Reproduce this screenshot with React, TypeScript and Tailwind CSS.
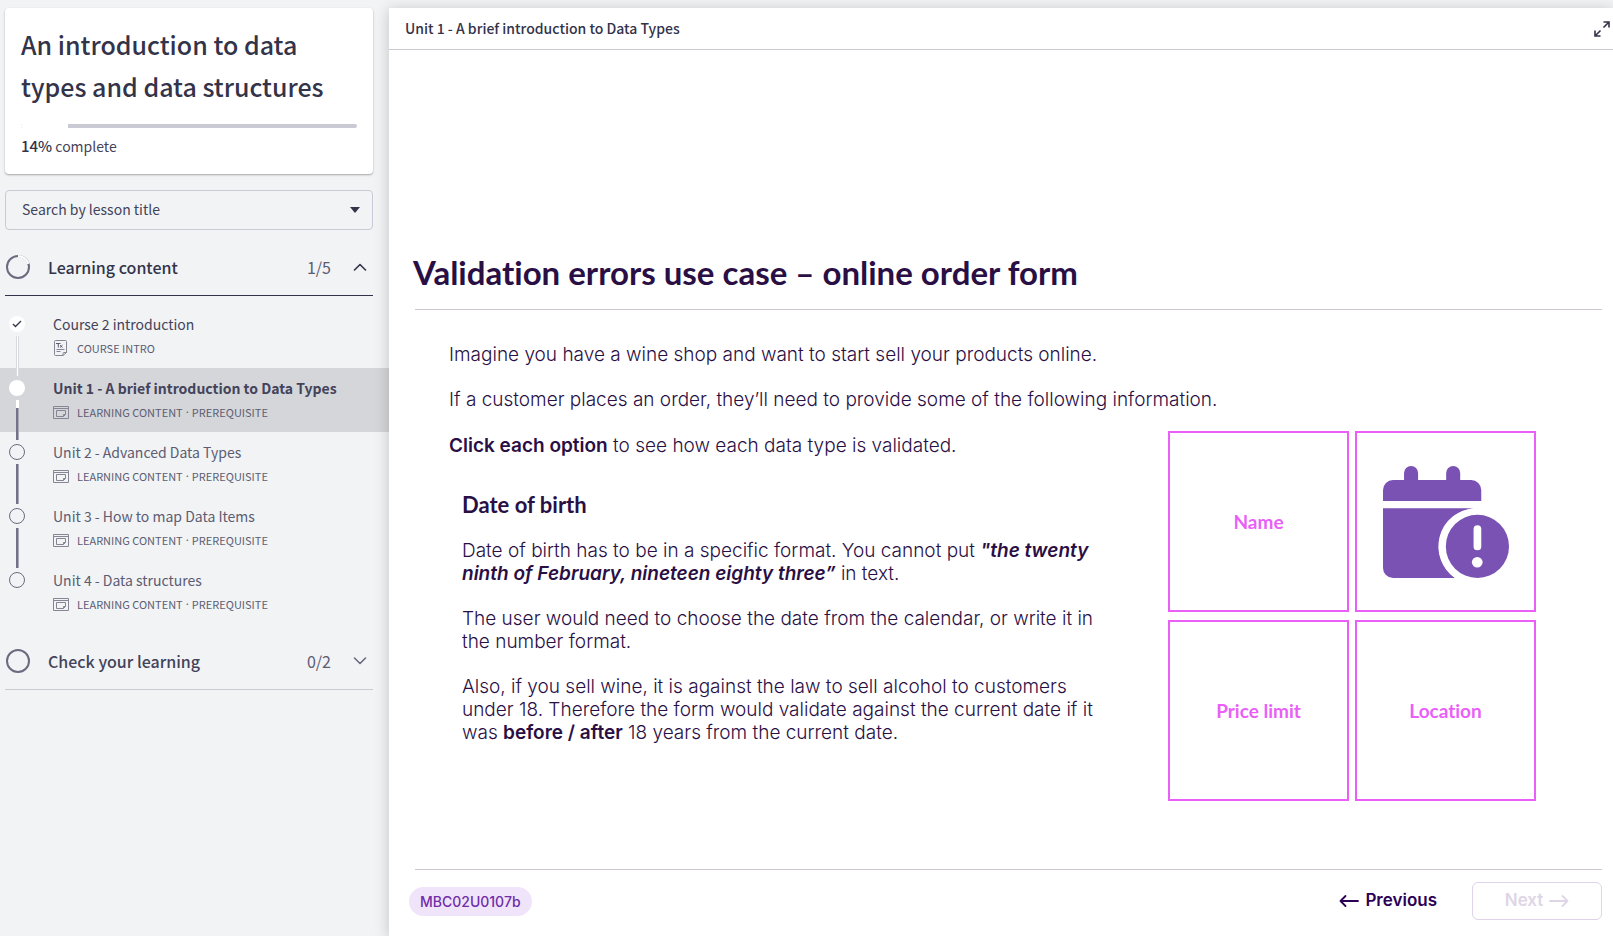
import React from "react";

type Status = "done" | "current" | "todo";

type Lesson = {
  title: string;
  tags: string[];
  status: Status;
  kind: "text" | "screen";
};

const lessons: Lesson[] = [
  { title: "Course 2 introduction", tags: ["COURSE INTRO"], status: "done", kind: "text" },
  {
    title: "Unit 1 - A brief introduction to Data Types",
    tags: ["LEARNING CONTENT", "PREREQUISITE"],
    status: "current",
    kind: "screen",
  },
  { title: "Unit 2 - Advanced Data Types", tags: ["LEARNING CONTENT", "PREREQUISITE"], status: "todo", kind: "screen" },
  { title: "Unit 3 - How to map Data Items", tags: ["LEARNING CONTENT", "PREREQUISITE"], status: "todo", kind: "screen" },
  { title: "Unit 4 - Data structures", tags: ["LEARNING CONTENT", "PREREQUISITE"], status: "todo", kind: "screen" },
];

function TextPageIcon() {
  return (
    <svg width="16" height="16" viewBox="0 0 16 16" fill="none" stroke="#858594" strokeWidth="1" aria-hidden="true">
      <path d="M10 15.5H2.5a1 1 0 0 1-1-1v-13a1 1 0 0 1 1-1h10a1 1 0 0 1 1 1v11z" />
      <path d="M10 15.5v-2a1 1 0 0 1 1-1h2.500M3.500 9.500h8M3.500 11.500h4" />
      <path d="M3 3.500h4.500M5.300 3.500v4M7 5.200l2.500 2.300M9.500 5.200L7 7.500" stroke="#5c5c72" />
    </svg>
  );
}

function ScreenIcon() {
  return (
    <svg width="16" height="13" viewBox="0 0 16 13" fill="none" stroke="#858594" strokeWidth="1" aria-hidden="true">
      <path d="M.5.5h15v12H.5zM.5 2.5h15" />
      <path d="M3.500 4.500h9v4l-2 2h-7zM12.500 8.500h-2v2" />
    </svg>
  );
}

function CalendarAlertIcon() {
  return (
    <svg width="126" height="112" viewBox="0 0 377 335" fill="#7952b3" aria-hidden="true">
      <path d="M0 105V72a30 30 0 0 1 30-30h33V21a21 21 0 0 1 42 0v21h84V21a21 21 0 0 1 42 0v21h33a30 30 0 0 1 30 30v33z" />
      <path d="M0 126h272A115 115 0 0 0 215 335H30a30 30 0 0 1-30-30z" />
      <circle cx="282" cy="241" r="115" fill="#fff" />
      <circle cx="282.500" cy="240.500" r="94.500" />
      <rect x="271" y="177" width="23" height="75" rx="11.500" fill="#fff" />
      <circle cx="282" cy="288" r="16" fill="#fff" />
    </svg>
  );
}

function Arrow({ left = false }: { left?: boolean }) {
  return (
    <svg width="20" height="14" viewBox="0 0 20 14" fill="none" stroke="currentColor" strokeWidth="1.800" strokeLinecap="round" strokeLinejoin="round" aria-hidden="true">
      <path d={left ? "M19 7H1.500M6.500 2l-5 5 5 5" : "M1 7h17.500M13.500 2l5 5-5 5"} />
    </svg>
  );
}

function Chevron({ up = false }: { up?: boolean }) {
  return (
    <svg width="14" height="8" viewBox="0 0 14 8" fill="none" stroke="currentColor" strokeWidth="1.600" strokeLinecap="round" strokeLinejoin="round" aria-hidden="true">
      <path d={up ? "M1.500 7L7 1.500 12.500 7" : "M1.500 1L7 6.500 12.500 1"} />
    </svg>
  );
}

function ProgressRing({ started = false }: { started?: boolean }) {
  return (
    <svg width="24" height="24" viewBox="0 0 24 24" fill="none" strokeWidth="2" aria-hidden="true">
      <circle cx="12" cy="12" r="11" stroke="#6b6a80" />
      {started && (
        <>
          <path d="M12 1A11 11 0 0 1 22.460 8.600" stroke="#d9dade" strokeWidth="2.500" />
          <path d="M12 1.300A10.700 10.700 0 0 1 22.200 8.700" stroke="#fff" strokeWidth="2" />
        </>
      )}
    </svg>
  );
}

function GroupHeader({ title, count, open }: { title: string; count: string; open: boolean }) {
  return (
    <button
      type="button"
      aria-expanded={open}
      className={`mx-[5px] flex h-[57px] items-center border-b pl-[1px] pr-1.5 text-left ${
        open ? "border-[#33334a] text-[#33334a]" : "border-[#c9cad2] text-[#43435a]"
      }`}
    >
      <ProgressRing started={open} />
      <span className="ml-[18px] flex-1 text-base font-medium">{title}</span>
      <span className="mr-[22px] text-base text-[#5c5c72]">{count}</span>
      <span className={open ? "" : "text-[#6b6a80]"}>
        <Chevron up={open} />
      </span>
    </button>
  );
}

function StatusDot({ status }: { status: Status }) {
  if (status === "todo") return <span className="size-4 rounded-full border border-[#6b6a80]" />;
  return (
    <span className="flex size-4 items-center justify-center rounded-full bg-white">
      {status === "done" && (
        <svg width="10" height="8" viewBox="0 0 10 8" fill="none" stroke="#33334a" strokeWidth="1.300" aria-hidden="true">
          <path d="M1 4l2.500 2.500L9 1" />
        </svg>
      )}
    </span>
  );
}

const doneTrack = "border-x border-[#d9dade] bg-white";
const todoTrack = "border-r border-[#a9a9b6] bg-[#72718a]";

function LessonRow({ lesson, index }: { lesson: Lesson; index: number }) {
  const previous = lessons[index - 1];
  const last = index === lessons.length - 1;
  const current = lesson.status === "current";
  return (
    <li>
      <a href={`#lesson-${index}`} className={`flex h-16 pl-[9px] ${current ? "bg-[#d5d6da]" : ""}`}>
        <span className="flex w-4 flex-col items-center">
          <span className={`mb-1 h-2 w-[3px] ${previous ? (previous.status === "done" ? doneTrack : todoTrack) : ""}`} />
          <StatusDot status={lesson.status} />
          {!last && (
            <span className="mt-1 flex w-[3px] flex-1 flex-col">
              {current && <span className="h-2 bg-white" />}
              <span className={`flex-1 ${lesson.status === "done" ? doneTrack : todoTrack}`} />
            </span>
          )}
        </span>
        <span className="ml-7 flex flex-col pt-2.5">
          <span
            className={`text-sm leading-5 ${
              current ? "font-bold text-[#43435a]" : lesson.status === "done" ? "text-[#43435a]" : "text-[#5c5c72]"
            }`}
          >
            {lesson.title}
          </span>
          <span className="mt-1.5 flex items-center gap-2 text-[11px] leading-4 text-[#5c5c72]">
            <span className="flex w-4 justify-center">{lesson.kind === "text" ? <TextPageIcon /> : <ScreenIcon />}</span>
            <span className="flex">
              {lesson.tags.map((tag, i) => (
                <React.Fragment key={tag}>
                  {i > 0 && <span className="px-[3px] font-['Inter',sans-serif]">·</span>}
                  <span>{tag}</span>
                </React.Fragment>
              ))}
            </span>
          </span>
        </span>
      </a>
    </li>
  );
}

function Sidebar() {
  return (
    <aside className="flex w-[389px] shrink-0 flex-col pt-2">
      <section className="ml-[5px] mr-4 rounded bg-white px-4 pb-[18px] pt-[15px] shadow-[0_1px_2px_#a4a4a4]">
        <h1 className="text-[25px] font-medium leading-[42px] text-[#33334a]">An introduction to data types and data structures</h1>
        <div
          role="progressbar"
          aria-label="Course progress"
          aria-valuenow={14}
          aria-valuemin={0}
          aria-valuemax={100}
          className="mt-[17px] h-1 overflow-hidden rounded-full bg-[#c9cad4]"
        >
          <div className="h-full w-[14%] bg-white" />
        </div>
        <p className="mt-2 text-sm leading-5 text-[#43435a]">
          <span className="text-[15px] font-medium text-[#33334a]">14%</span> complete
        </p>
      </section>

      <div className="relative ml-[5px] mr-4 mt-4">
        <select
          aria-label="Search by lesson title"
          className="block h-10 w-full appearance-none rounded border border-[#c9cad6] bg-transparent pb-0.5 pl-4 pr-10 text-sm text-[#43435a]"
        >
          <option>Search by lesson title</option>
          {lessons.map((lesson) => (
            <option key={lesson.title}>{lesson.title}</option>
          ))}
        </select>
        <svg className="pointer-events-none absolute right-[13px] top-[17px]" width="10" height="6" viewBox="0 0 10 6" fill="#33334a" aria-hidden="true">
          <path d="M0 0h10L5 6z" />
        </svg>
      </div>

      <nav className="mt-[9px] flex flex-col" aria-label="Lessons">
        <div className="mr-[11px] flex flex-col">
          <GroupHeader title="Learning content" count="1/5" open />
        </div>
        <ul className="mb-[9px] mt-2">
          {lessons.map((lesson, i) => (
            <LessonRow key={lesson.title} lesson={lesson} index={i} />
          ))}
        </ul>
        <div className="mr-[11px] flex flex-col">
          <GroupHeader title="Check your learning" count="0/2" open={false} />
        </div>
      </nav>
    </aside>
  );
}

function OptionCard({ label, selected = false }: { label: string; selected?: boolean }) {
  return (
    <button
      type="button"
      aria-label={label}
      aria-pressed={selected}
      className="flex size-[181px] items-center justify-center border-2 border-[#e95ff7] font-['Lato',sans-serif] text-[19px] font-bold text-[#e95ff7] [font-variant-ligatures:none]"
    >
      {selected ? <CalendarAlertIcon /> : label}
    </button>
  );
}

function Slide() {
  return (
    <article className="flex-1 pl-6 pr-[11px] pt-[203px] font-['Inter',sans-serif] text-[19px] font-light leading-[22px] text-[#2a0f45]">
      <h2 className="font-['Lato',sans-serif] text-[33px] font-bold leading-[38px] [font-variant-ligatures:none]">
        Validation errors use case – online order form
      </h2>
      <hr className="ml-0.5 mt-[18px] border-[#cfc6d1]" />
      <div className="pl-9 pr-[66px] pt-[34px]">
        <p>Imagine you have a wine shop and want to start sell your products online.</p>
        <p className="mt-[23px]">If a customer places an order, they’ll need to provide some of the following information.</p>
        <div className="mt-5 flex justify-between">
          <div className="pt-1">
            <p>
              <strong className="font-semibold">Click each option</strong> to see how each data type is validated.
            </p>
            <section className="flex max-w-[660px] flex-col gap-[22px] pl-[13px] pt-9 leading-[23px]">
              <h3 className="font-['Lato',sans-serif] text-[22px] font-bold leading-6">Date of birth</h3>
              <p>
                Date of birth has to be in a specific format. You cannot put{" "}
                <em className="font-semibold">
                  "the twenty
                  <br />
                  ninth of February, nineteen eighty three”
                </em>{" "}
                in text.
              </p>
              <p>
                The user would need to choose the date from the calendar, or write it in
                <br />
                the number format.
              </p>
              <p>
                Also, if you sell wine, it is against the law to sell alcohol to customers
                <br />
                under 18. Therefore the form would validate against the current date if it
                <br />
                was <strong className="font-semibold">before / after</strong> 18 years from the current date.
              </p>
            </section>
          </div>
          <div className="grid grid-cols-2 gap-x-1.5 gap-y-2 self-start">
            <OptionCard label="Name" />
            <OptionCard label="Date of birth" selected />
            <OptionCard label="Price limit" />
            <OptionCard label="Location" />
          </div>
        </div>
      </div>
    </article>
  );
}

function SlideFooter() {
  return (
    <footer className="pl-5 pr-[11px] pb-4 font-['Inter',sans-serif]">
      <hr className="ml-1.5 border-[#cfc6d1]" />
      <div className="flex items-center pt-3">
        <span className="rounded-full bg-[#f0e4fb] px-[11px] text-sm font-medium leading-[29px] text-[#6f2da8]">MBC02U0107b</span>
        <button type="button" className="ml-auto flex items-center gap-1.5 text-[17px] font-semibold text-[#2d0057]">
          <Arrow left />
          Previous
        </button>
        <button
          type="button"
          disabled
          className="ml-[35px] flex h-[38px] w-[130px] items-center justify-center gap-1.5 rounded-md border border-[#ded3e8] text-[17px] font-semibold text-[#ded6e6]"
        >
          Next
          <Arrow />
        </button>
      </div>
    </footer>
  );
}

export default function App() {
  return (
    <div className="flex min-h-screen bg-[#f1f3f5] font-['Noto_Sans_CJK_SC',sans-serif]">
      <Sidebar />
      <main className="z-10 mt-2 flex min-w-0 flex-1 flex-col bg-white shadow-[0_2px_14px_rgba(0,0,0,0.2)]">
        <header className="flex h-[42px] items-center justify-between border-b border-[#c9cad2] pl-4 pr-[3px] text-[#33334a]">
          <span className="pb-0.5 text-sm font-medium">Unit 1 - A brief introduction to Data Types</span>
          <button type="button" aria-label="Full screen">
            <svg width="16" height="16" viewBox="0 0 16 16" fill="none" stroke="currentColor" strokeWidth="1.600" className="block" aria-hidden="true">
              <path d="M9.500 6.500L15 1M9.500 1H15v5.500M6.500 9.500L1 15M1 9.500V15h5.500" />
            </svg>
          </button>
        </header>
        <Slide />
        <SlideFooter />
      </main>
    </div>
  );
}
